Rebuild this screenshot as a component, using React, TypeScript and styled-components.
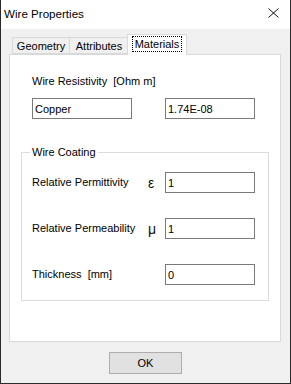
import React from 'react';
import styled, { createGlobalStyle } from 'styled-components';

const GlobalStyle = createGlobalStyle`
  html, body { margin: 0; padding: 0; }
  body {
    width: 291px;
    height: 384px;
    overflow: hidden;
    font-family: "Liberation Sans", Arial, sans-serif;
    color: #000;
  }
`;

const Window = styled.div`
  width: 291px;
  height: 384px;
  box-sizing: border-box;
  border: 1px solid #2b2b2b;
  border-top: none;
  background: #f0f0f0;
  display: flex;
  flex-direction: column;
`;

const TitleBar = styled.div`
  height: 29px;
  flex: none;
  background: #fff;
  display: flex;
  align-items: center;
  justify-content: space-between;
  padding: 0 11px 0 3px;
`;

const Title = styled.span`
  font-size: 11.6px;
  margin-top: -2px;
`;

const CloseIcon = () => (
  <svg width="11" height="10" viewBox="0 0 11 10" style={{ marginTop: -3 }}>
    <path d="M0.5 0.5 L10.5 9.5 M10.5 0.5 L0.5 9.5" stroke="#111" strokeWidth="1" fill="none" />
  </svg>
);

const Body = styled.div`
  flex: 1;
  display: flex;
  flex-direction: column;
  padding: 5px 8px 0 8px;
`;

const TabStrip = styled.div`
  display: flex;
  align-items: flex-end;
  height: 20px;
  padding-left: 3px;
  position: relative;
  z-index: 1;
`;

const Tab = styled.div<{ $active?: boolean; $w: number }>`
  box-sizing: border-box;
  width: ${p => p.$w}px;
  height: ${p => (p.$active ? 21 : 17)}px;
  margin-bottom: ${p => (p.$active ? -1 : 0)}px;
  margin-left: ${p => (p.$active ? -2 : -1)}px;
  &:first-child { margin-left: 0; }
  border: 1px solid #d9d9d9;
  border-bottom: ${p => (p.$active ? 'none' : '1px solid #d9d9d9')};
  background: ${p => (p.$active ? '#fff' : '#f0f0f0')};
  font-size: 11px;
  display: flex;
  align-items: ${p => (p.$active ? 'flex-start' : 'center')};
  justify-content: center;
  padding-top: ${p => (p.$active ? 2 : 0)}px;
`;

const FocusLabel = styled.span`
  outline: 1px dotted #000;
  padding: 0 2px;
  line-height: 14px;
`;

const Panel = styled.div`
  box-sizing: border-box;
  width: 272px;
  height: 288px;
  background: #fff;
  border: 1px solid #d9d9d9;
  padding: 20px 11px 0 11px;
  display: flex;
  flex-direction: column;
`;

const Label = styled.span`
  font-size: 11px;
  line-height: 13px;
  white-space: pre;
`;

const Section = styled.div`
  padding-left: 11px;
  display: flex;
  flex-direction: column;
  gap: 10px;
`;

const InputRow = styled.div`
  display: flex;
  gap: 33px;
`;

const TextBox = styled.input<{ $w: number }>`
  box-sizing: border-box;
  width: ${p => p.$w}px;
  height: 21px;
  border: 1px solid #7a7a7a;
  padding: 0 2px;
  font-family: "Liberation Sans", Arial, sans-serif;
  font-size: 11px;
  color: #000;
  background: #fff;
  outline: none;
`;

const Group = styled.fieldset`
  box-sizing: border-box;
  width: 248px;
  margin: 27px 0 0 0;
  border: 1px solid #dcdcdc;
  padding: 13px 12px 15px 10px;
  display: flex;
  flex-direction: column;
  gap: 25px;
`;

const Legend = styled.legend`
  font-size: 11px;
  line-height: 13px;
  margin-left: -2px;
  padding: 0 2px;
`;

const FieldRow = styled.div`
  display: grid;
  grid-template-columns: 116px 17px 90px;
  align-items: center;
`;

const Symbol = styled.span`
  font-size: 14px;
  line-height: 14px;
  color: #111;
`;

const Footer = styled.div`
  flex: 1;
  display: flex;
  justify-content: center;
  align-items: flex-start;
  padding-top: 10px;
`;

const Button = styled.button`
  box-sizing: border-box;
  width: 73px;
  height: 22px;
  background: #e1e1e1;
  border: 1px solid #adadad;
  font-family: "Liberation Sans", Arial, sans-serif;
  font-size: 11px;
  color: #000;
  padding: 0;
`;

const rows = [
  { label: 'Relative Permittivity', symbol: 'ε', value: '1' },
  { label: 'Relative Permeability', symbol: 'μ', value: '1' },
  { label: 'Thickness  [mm]', symbol: '', value: '0' },
];

export default function App() {
  return (
    <>
      <GlobalStyle />
      <Window>
        <TitleBar>
          <Title>Wire Properties</Title>
          <CloseIcon />
        </TitleBar>
        <Body>
          <TabStrip>
            <Tab $w={58}>Geometry</Tab>
            <Tab $w={60}>Attributes</Tab>
            <Tab $w={60} $active>
              <FocusLabel>Materials</FocusLabel>
            </Tab>
          </TabStrip>
          <Panel>
            <Section>
              <Label>Wire Resistivity  [Ohm m]</Label>
              <InputRow>
                <TextBox $w={100} defaultValue="Copper" />
                <TextBox $w={90} defaultValue="1.74E-08" />
              </InputRow>
            </Section>
            <Group>
              <Legend>Wire Coating</Legend>
              {rows.map(r => (
                <FieldRow key={r.label}>
                  <Label>{r.label}</Label>
                  <Symbol>{r.symbol}</Symbol>
                  <TextBox $w={90} defaultValue={r.value} />
                </FieldRow>
              ))}
            </Group>
          </Panel>
          <Footer>
            <Button>OK</Button>
          </Footer>
        </Body>
      </Window>
    </>
  );
}
